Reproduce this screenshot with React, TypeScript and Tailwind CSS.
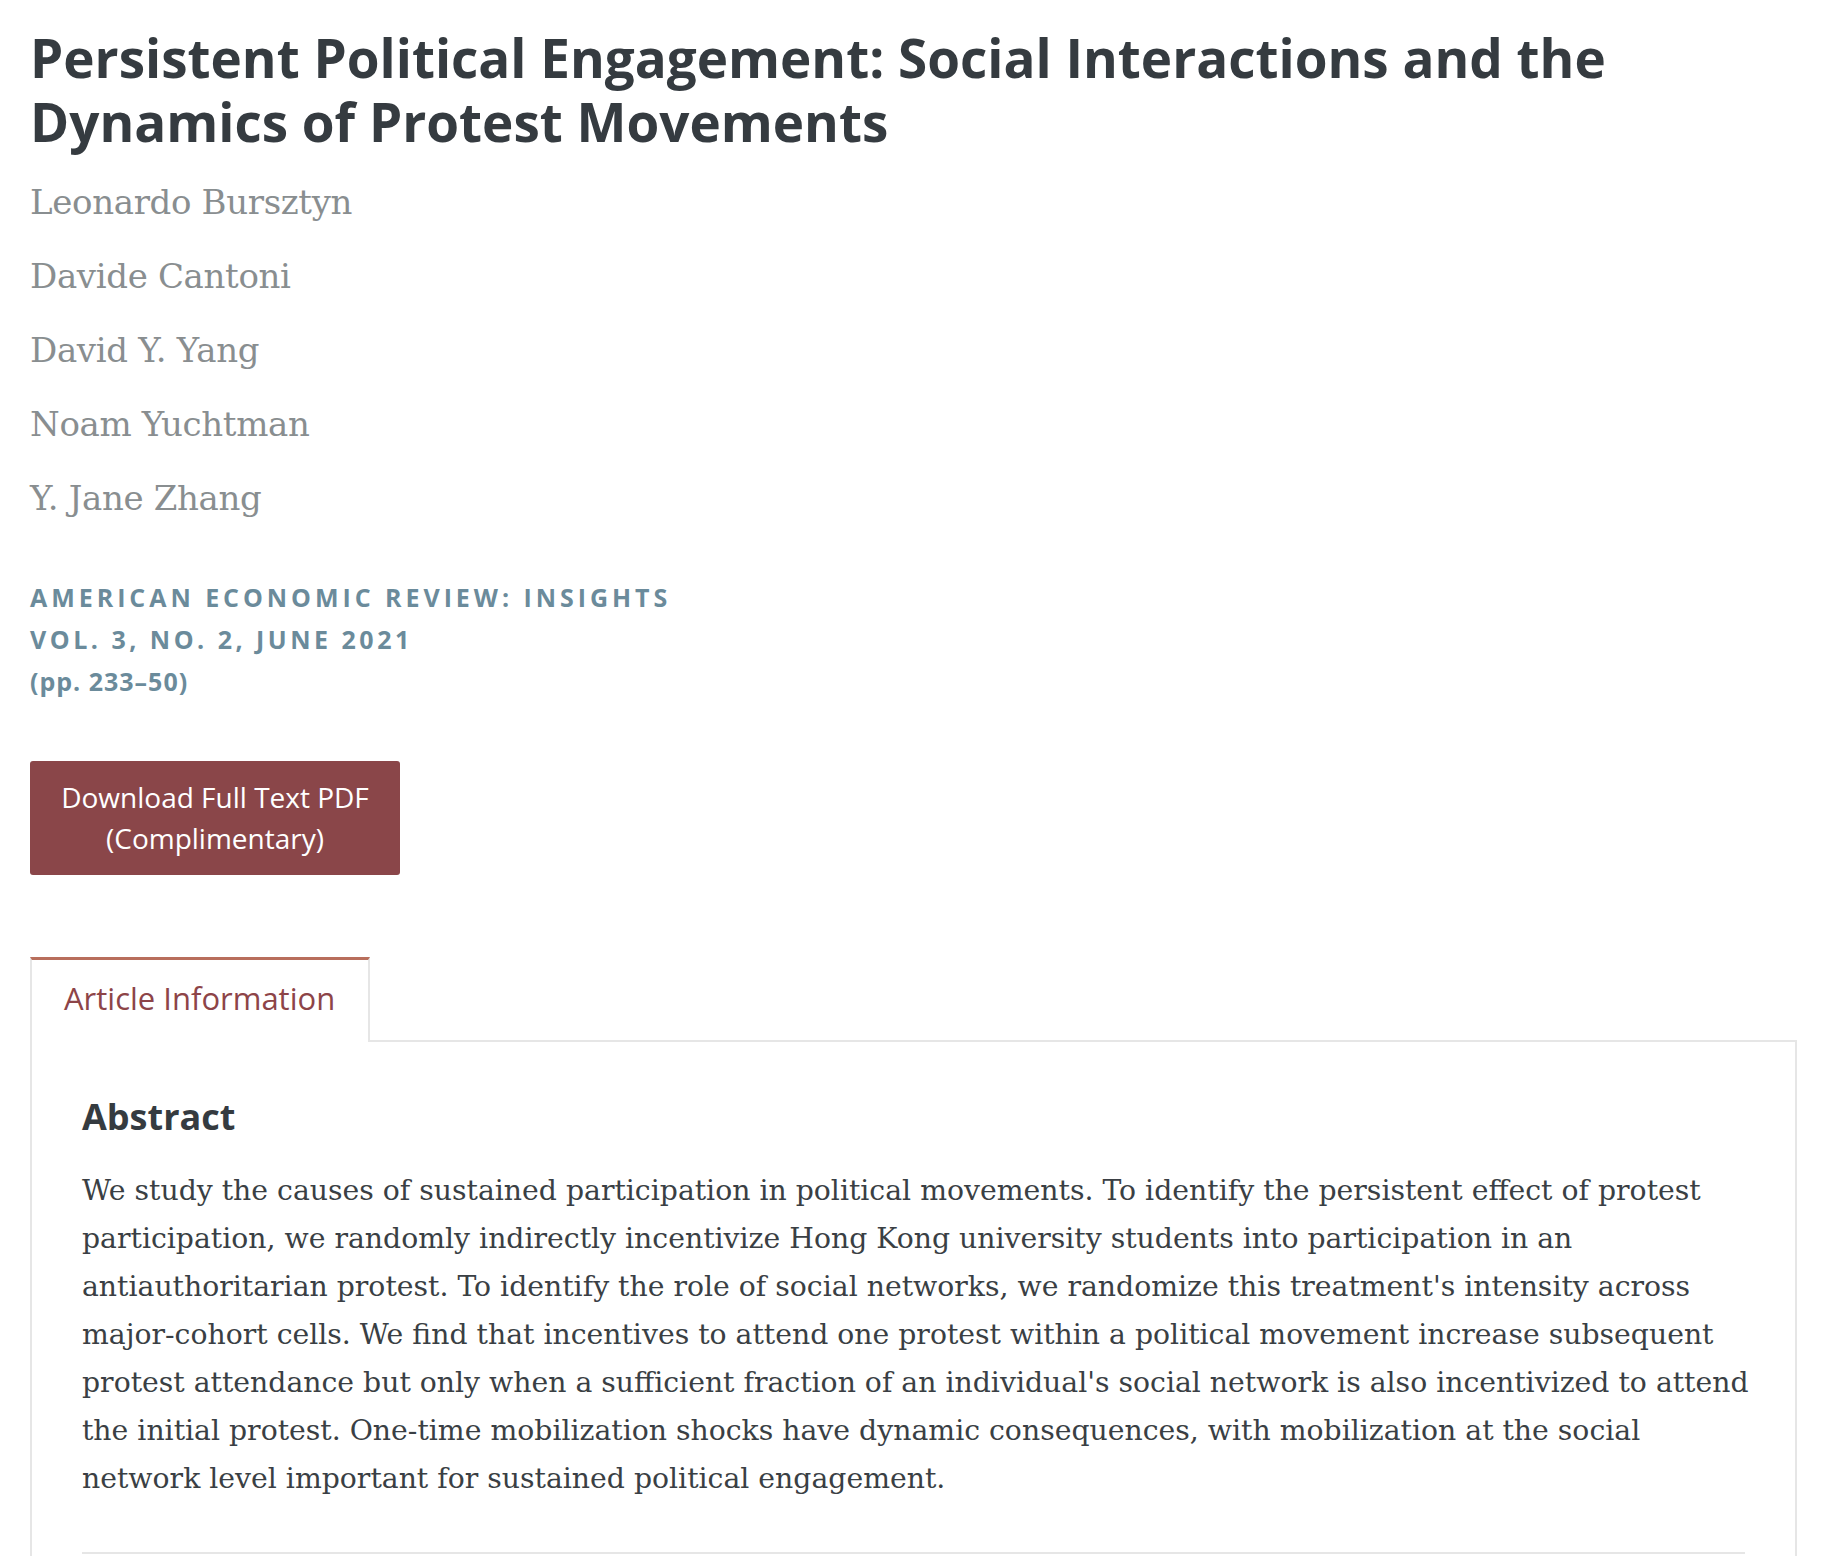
import React from "react";

const authors = [
  "Leonardo Bursztyn",
  "Davide Cantoni",
  "David Y. Yang",
  "Noam Yuchtman",
  "Y. Jane Zhang",
];

const abstractLines = [
  "We study the causes of sustained participation in political movements. To identify the persistent effect of protest",
  "participation, we randomly indirectly incentivize Hong Kong university students into participation in an",
  "antiauthoritarian protest. To identify the role of social networks, we randomize this treatment's intensity across",
  "major-cohort cells. We find that incentives to attend one protest within a political movement increase subsequent",
  "protest attendance but only when a sufficient fraction of an individual's social network is also incentivized to attend",
  "the initial protest. One-time mobilization shocks have dynamic consequences, with mobilization at the social",
  "network level important for sustained political engagement.",
];

const App = () => {
  return (
    <div className="h-[1556px] overflow-hidden bg-white pl-[30px] pr-[37px] pt-[26px] font-['Open_Sans',sans-serif]">
      {/* Title */}
      <h1 className="text-[53px] leading-[64px] font-bold text-[#353b40]">
        Persistent Political Engagement: Social Interactions and the
        <br />
        Dynamics of Protest Movements
      </h1>

      {/* Authors */}
      <div className="mt-[11px] font-['DejaVu_Serif',serif] text-[34px] leading-[74px] tracking-[-0.01em] text-[#898e90]">
        {authors.map((name) => (
          <div key={name}>{name}</div>
        ))}
      </div>

      {/* Journal */}
      <div className="mt-[41px] text-[25px] leading-[42px] font-bold text-[#6b8b9b]">
        <div className="tracking-[0.158em]">AMERICAN ECONOMIC REVIEW: INSIGHTS</div>
        <div className="tracking-[0.14em]">VOL. 3, NO. 2, JUNE 2021</div>
        <div className="tracking-[0.04em]">(pp. 233–50)</div>
      </div>

      {/* Download button */}
      <div className="mt-[59px] flex">
        <a
          href="#"
          className="block w-[370px] rounded-[3px] bg-[#8a4649] py-[16px] text-center text-[28px] leading-[41px] text-white"
        >
          Download Full Text PDF
          <br />
          (Complimentary)
        </a>
      </div>

      {/* Tabs */}
      <div className="mt-[82px] flex">
        <div className="h-[85px] w-[340px] whitespace-nowrap border-x-2 border-t-[3px] border-x-[#e6e6e6] border-t-[#b86e5c] bg-white px-[32px] pt-[18px] text-[31px] leading-[41px] text-[#8d4448]">
          Article Information
        </div>
        <div className="flex-1 border-b-2 border-[#e6e6e6]" />
      </div>

      {/* Tab panel */}
      <div className="border-x-2 border-[#e6e6e6] px-[50px] pt-[55px] pb-[40px]">
        <h2 className="text-[36px] leading-[40px] font-bold text-[#353b40]">Abstract</h2>
        <p className="mt-[30px] whitespace-nowrap font-['DejaVu_Serif',serif] text-[28.3px] leading-[48px] text-[#3a3f44]">
          {abstractLines.map((line, i) => (
            <React.Fragment key={i}>
              {line}
              {i < abstractLines.length - 1 && <br />}
            </React.Fragment>
          ))}
        </p>
        <div className="mt-[49px] h-[2px] bg-[#e6e6e6]" />
      </div>
    </div>
  );
};

export default App;
